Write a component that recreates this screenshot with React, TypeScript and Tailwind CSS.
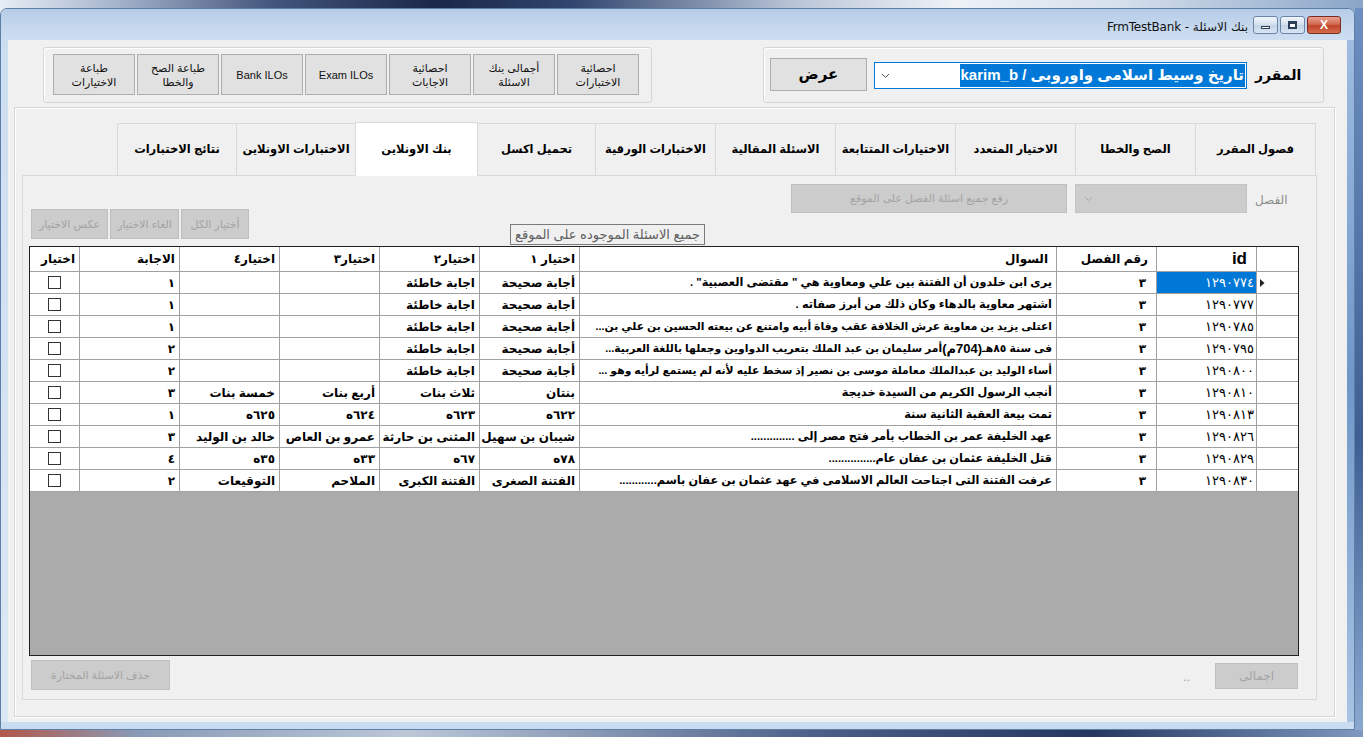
import React from "react";

type Row = {
  id: string;
  ch: string;
  q: React.ReactNode;
  c1: string;
  c2: string;
  c3: string;
  c4: string;
  a: string;
  long?: boolean;
};

const rows: Row[] = [
  { id: "١٢٩٠٧٧٤", ch: "٣", q: 'يرى ابن خلدون  أن الفتنة بين علي ومعاوية هي " مقتضى العصبية" .', c1: "أجابة صحيحة", c2: "اجابة خاطئة", c3: "", c4: "", a: "١" },
  { id: "١٢٩٠٧٧٧", ch: "٣", q: "اشتهر معاوية بالدهاء وكان ذلك من أبرز صفاته .", c1: "أجابة صحيحة", c2: "اجابة خاطئة", c3: "", c4: "", a: "١" },
  { id: "١٢٩٠٧٨٥", ch: "٣", q: "اعتلى يزيد بن معاوية عرش الخلافة عقب وفاة أبيه وامتنع عن بيعته الحسين بن علي بن...", c1: "أجابة صحيحة", c2: "اجابة خاطئة", c3: "", c4: "", a: "١", long: true },
  {
    id: "١٢٩٠٧٩٥",
    ch: "٣",
    q: (
      <>
        فى سنة ٨٥هـ <span className="text-[13px]">(704م)</span> أمر سليمان بن عبد الملك بتعريب الدواوين وجعلها باللغة العربية...
      </>
    ),
    c1: "أجابة صحيحة",
    c2: "اجابة خاطئة",
    c3: "",
    c4: "",
    a: "٢",
    long: true,
  },
  { id: "١٢٩٠٨٠٠", ch: "٣", q: "أساء الوليد بن عبدالملك معاملة موسى بن نصير إذ سخط عليه لأنه لم يستمع لرأيه وهو ...", c1: "أجابة صحيحة", c2: "اجابة خاطئة", c3: "", c4: "", a: "٢", long: true },
  { id: "١٢٩٠٨١٠", ch: "٣", q: "أنجب الرسول الكريم من السيدة خديجة", c1: "بنتان", c2: "ثلاث بنات", c3: "أربع بنات", c4: "خمسة بنات", a: "٣" },
  { id: "١٢٩٠٨١٣", ch: "٣", q: "تمت بيعة العقبة الثانية سنة", c1: "٦٢٢ه", c2: "٦٢٣ه", c3: "٦٢٤ه", c4: "٦٢٥ه", a: "١" },
  { id: "١٢٩٠٨٢٦", ch: "٣", q: "عهد الخليفة عمر بن الخطاب بأمر فتح مصر إلى ..............", c1: "شيبان بن سهيل", c2: "المثنى بن حارثة", c3: "عمرو بن العاص", c4: "خالد بن الوليد", a: "٣" },
  { id: "١٢٩٠٨٢٩", ch: "٣", q: "قتل الخليفة عثمان بن عفان عام...............", c1: "٧٨ه", c2: "٦٧ه", c3: "٣٣ه", c4: "٣٥ه", a: "٤" },
  { id: "١٢٩٠٨٣٠", ch: "٣", q: "عرفت الفتنة التى اجتاحت العالم الاسلامى في عهد عثمان بن عفان باسم............", c1: "الفتنة الصغرى", c2: "الفتنة الكبرى", c3: "الملاحم", c4: "التوقيعات", a: "٢" },
];

const tabs = [
  "نتائج الاختبارات",
  "الاختبارات الاونلاين",
  "بنك الاونلاين",
  "تحميل اكسل",
  "الاختبارات الورقية",
  "الاسئلة المقالية",
  "الاختيارات المتتابعة",
  "الاختيار المتعدد",
  "الصح والخطا",
  "فصول المقرر",
];

const tabWidths = [
  "w-[120px]",
  "w-[120px]",
  "w-[123px]",
  "w-[119px]",
  "w-[121px]",
  "w-[121px]",
  "w-[121px]",
  "w-[121px]",
  "w-[121px]",
  "w-[121px]",
];

const topButtons: string[][] = [
  ["طباعة", "الاختيارات"],
  ["طباعة الصح", "والخطا"],
  ["Bank ILOs"],
  ["Exam ILOs"],
  ["احصائية", "الاجابات"],
  ["أجمالى بنك", "الاسئلة"],
  ["احصائية", "الاختبارات"],
];

function Checkbox() {
  return <div className="w-[13px] h-[13px] border border-[#333333] bg-white" />;
}

function Cell({
  w,
  children,
  className = "",
}: {
  w: string;
  children?: React.ReactNode;
  className?: string;
}) {
  return (
    <div
      dir="rtl"
      className={`${w} shrink-0 h-full flex items-center overflow-hidden whitespace-nowrap px-[4px] border-r border-[#a0a0a0] ${className}`}
    >
      {children}
    </div>
  );
}

function DisabledButton({
  w,
  h,
  children,
  className = "",
}: {
  w: string;
  h: string;
  children: React.ReactNode;
  className?: string;
}) {
  return (
    <div
      dir="rtl"
      className={`${w} ${h} shrink-0 flex items-center justify-center bg-[#cccccc] border border-[#bfbfbf] text-[#a3a3a3] text-[11px] whitespace-nowrap ${className}`}
    >
      {children}
    </div>
  );
}

export default function App() {
  return (
    <div className="w-[1363px] h-[737px] overflow-hidden flex flex-col font-['Liberation_Sans','DejaVu_Sans',sans-serif] text-black bg-[linear-gradient(90deg,#e7edf5_0%,#aab8cf_8%,#43557c_20%,#1a2748_32%,#31456e_42%,#b8c4d6_58%,#eef2f7_70%,#d6e0ec_82%,#8aa6c8_100%)]">
      <div className="h-[8px] shrink-0" />
      <div className="flex h-[722px] shrink-0">
        {/* Window */}
        <div className="w-[1355px] h-[722px] shrink-0 flex flex-col border border-[#5d7ea6] rounded-t-[7px] bg-[#c7d9ee] overflow-hidden">
          {/* Title bar */}
          <div className="h-[31px] shrink-0 flex items-start justify-end bg-[linear-gradient(180deg,#b6cce6_0%,#c4d7ed_55%,#cddef1_100%)] pr-[13px]">
            <div dir="rtl" className="mt-[9px] mr-[5px] text-[12px] text-[#111] font-['DejaVu_Sans','Liberation_Sans',sans-serif] tracking-[-0.2px]">
              بنك الاسئلة - FrmTestBank
            </div>
            <div className="mt-[7px] flex gap-[2px]">
              <div className="w-[25px] h-[18px] rounded-[3px] border border-[#6b84a6] bg-[linear-gradient(180deg,#f2f6fb,#d4e0ee_50%,#c3d3e7_51%,#d9e5f2)] flex items-end justify-center pb-[4px]">
                <div className="w-[9px] h-[3px] bg-[#f8f8f8] border border-[#2c3e58]" />
              </div>
              <div className="w-[25px] h-[18px] rounded-[3px] border border-[#6b84a6] bg-[linear-gradient(180deg,#f2f6fb,#d4e0ee_50%,#c3d3e7_51%,#d9e5f2)] flex items-center justify-center">
                <div className="w-[9px] h-[8px] bg-white border-2 border-[#2c3e58] border-t-[3px]" />
              </div>
              <div className="w-[34px] h-[18px] rounded-[3px] border border-[#7a2a1e] bg-[linear-gradient(180deg,#e9a090,#d06a52_45%,#c0432a_55%,#d5704f)] flex items-center justify-center text-white text-[12px] font-bold leading-none">
                X
              </div>
            </div>
          </div>

          <div className="flex h-[682px] shrink-0">
            <div className="w-[7px] shrink-0 bg-[linear-gradient(180deg,#cddef1,#dbe7f4)]" />
            {/* Client */}
            <div className="w-[1339px] h-[682px] shrink-0 bg-[#f0f0f0] flex flex-col">
              {/* Top row */}
              <div className="h-[67px] shrink-0 flex items-start pt-[7px]">
                <div className="ml-[35px] w-[609px] h-[56px] shrink-0 border border-[#d5d5d5] rounded-[3px] shadow-[inset_1px_1px_0_#ffffff] pl-[9px] pt-[6px] flex gap-[2px]">
                  {topButtons.map((b, i) => (
                    <div
                      key={i}
                      dir="rtl"
                      className="w-[82px] h-[41px] shrink-0 bg-[#e1e1e1] border border-[#adadad] flex flex-col items-center justify-center text-[11px] leading-[14px] text-[#111]"
                    >
                      {b.map((l, j) => (
                        <div key={j}>{l}</div>
                      ))}
                    </div>
                  ))}
                </div>
                <div className="ml-[111px] w-[561px] h-[56px] shrink-0 border border-[#d5d5d5] rounded-[3px] shadow-[inset_1px_1px_0_#ffffff] flex items-start">
                  <div className="ml-[6px] mt-[10px] w-[97px] h-[33px] shrink-0 bg-[#e1e1e1] border border-[#adadad] flex items-center justify-center text-[15px] font-bold">
                    عرض
                  </div>
                  <div className="ml-[7px] mt-[14px] w-[373px] h-[27px] shrink-0 bg-white border border-[#0078d7] flex items-center">
                    <svg width="9" height="6" viewBox="0 0 9 6" className="ml-[6px]">
                      <path d="M1 1 L4.5 4.5 L8 1" fill="none" stroke="#555" strokeWidth="1" />
                    </svg>
                    <div className="flex-1" />
                    <div
                      dir="rtl"
                      className="mr-[1px] h-[23px] bg-[#0078d7] text-white text-[15px] font-bold flex items-center px-[1px] whitespace-nowrap"
                    >
                      تاريخ وسيط اسلامى واوروبى / karim_b
                    </div>
                  </div>
                  <div className="ml-[8px] mt-[17px] text-[14px] font-bold" dir="rtl">
                    المقرر
                  </div>
                </div>
              </div>

              {/* Panel */}
              <div className="ml-[6px] w-[1321px] h-[610px] shrink-0 border border-[#d5d5d5] shadow-[inset_1px_1px_0_#ffffff,1px_1px_0_#ffffff] pl-[7px] pt-[15px]">
                <div className="w-[1295px] flex flex-col">
                  {/* Tab headers */}
                  <div className="h-[52px] flex items-end justify-end pr-[1px]">
                    {tabs.map((t, i) => {
                      const sel = i === 2;
                      return (
                        <div
                          key={i}
                          dir="rtl"
                          className={`${tabWidths[i]} shrink-0 -ml-[1px] border border-[#d9d9d9] border-b-0 flex items-center justify-center text-[11.5px] font-bold whitespace-nowrap ${
                            sel ? "h-[54px] bg-white relative z-10 mb-[-1px]" : "h-[52px] bg-[#f0f0f0]"
                          }`}
                        >
                          {t}
                        </div>
                      );
                    })}
                  </div>
                  {/* Tab page */}
                  <div className="h-[525px] border border-[#d9d9d9] bg-[#f0f0f0] flex flex-col">
                    {/* controls row */}
                    <div className="h-[62px] mt-[8px] shrink-0 flex items-start">
                      <div className="ml-[8px] mt-[25px] flex gap-[2px]">
                        <DisabledButton w="w-[77px]" h="h-[30px]">عكس الاختيار</DisabledButton>
                        <DisabledButton w="w-[69px]" h="h-[30px]">الغاء الاختيار</DisabledButton>
                        <DisabledButton w="w-[68px]" h="h-[30px]">أختيار الكل</DisabledButton>
                      </div>
                      <div
                        dir="rtl"
                        className="ml-[261px] mt-[40px] w-[195px] h-[21px] shrink-0 border border-[#7a7a7a] flex items-center justify-center text-[13px] text-[#606060] whitespace-nowrap"
                      >
                        جميع الاسئلة الموجوده على الموقع
                      </div>
                      <DisabledButton w="w-[276px]" h="h-[29px]" className="ml-[86px]">
                        رفع جميع اسئلة الفصل على الموقع
                      </DisabledButton>
                      <div className="ml-[8px] w-[172px] h-[29px] shrink-0 bg-[#cccccc] border border-[#c4c4c4] flex items-center">
                        <svg width="9" height="6" viewBox="0 0 9 6" className="ml-[8px]">
                          <path d="M1 1 L4.5 4.5 L8 1" fill="none" stroke="#a8a8a8" strokeWidth="1" />
                        </svg>
                      </div>
                      <div dir="rtl" className="ml-[8px] mt-[7px] text-[12px] text-[#8c8c8c]">
                        الفصل
                      </div>
                    </div>

                    {/* Grid */}
                    <div className="ml-[6px] w-[1270px] h-[410px] shrink-0 border border-[#202020] bg-[#ababab] flex flex-col text-[12px]">
                      <div className="h-[25px] shrink-0 flex bg-white border-b border-[#a0a0a0] font-bold">
                        <Cell w="w-[50px]">اختيار</Cell>
                        <Cell w="w-[100px]">الاجابة</Cell>
                        <Cell w="w-[100px]">اختيار٤</Cell>
                        <Cell w="w-[100px]">اختيار٣</Cell>
                        <Cell w="w-[100px]">اختيار٢</Cell>
                        <Cell w="w-[100px]">اختيار ١</Cell>
                        <Cell w="w-[477px]" className="pr-[8px]">السوال</Cell>
                        <Cell w="w-[100px]" className="pr-[8px]">رقم الفصل</Cell>
                        <Cell w="w-[100px]" className="text-[17px] pr-[9px]">id</Cell>
                        <div className="w-[41px] shrink-0 h-full" />
                      </div>
                      {rows.map((r, i) => (
                        <div key={i} className="h-[22px] shrink-0 flex bg-white border-b border-[#a0a0a0]">
                          <Cell w="w-[50px]" className="justify-center">
                            <Checkbox />
                          </Cell>
                          <Cell w="w-[100px]" className="font-bold">{r.a}</Cell>
                          <Cell w="w-[100px]" className="font-bold">{r.c4}</Cell>
                          <Cell w="w-[100px]" className="font-bold">{r.c3}</Cell>
                          <Cell w="w-[100px]" className="font-bold">{r.c2}</Cell>
                          <Cell w="w-[100px]" className="font-bold">{r.c1}</Cell>
                          <Cell w="w-[477px]" className={`font-bold ${r.long ? "text-[10.8px]" : "text-[11.3px]"}`}>
                            {r.q}
                          </Cell>
                          <Cell w="w-[100px]" className="font-bold pr-[10px]">{r.ch}</Cell>
                          <Cell
                            w="w-[100px]"
                            className={`text-[13px] tracking-[3.6px] pr-[2px] ${i === 0 ? "bg-[#0078d7] text-white" : ""}`}
                          >
                            {r.id}
                          </Cell>
                          <div className="w-[41px] shrink-0 h-full flex items-center pl-[3px]">
                            {i === 0 ? (
                              <svg width="5" height="8" viewBox="0 0 5 8" className="shrink-0">
                                <path d="M0 0 L4.5 4 L0 8 Z" fill="#222" />
                              </svg>
                            ) : null}
                          </div>
                        </div>
                      ))}
                    </div>

                    {/* Bottom row */}
                    <div className="mt-[4px] flex items-start">
                      <DisabledButton w="w-[139px]" h="h-[30px]" className="ml-[8px]">
                        حذف الاسئلة المختارة
                      </DisabledButton>
                      <div className="flex-1" />
                      <div className="mt-[8px] text-[12px] text-[#9a9a9a]">..</div>
                      <DisabledButton w="w-[83px]" h="h-[26px]" className="ml-[25px] mt-[3px] mr-[18px] text-[12px]">
                        اجمالى
                      </DisabledButton>
                    </div>
                  </div>
                </div>
              </div>
            </div>
            <div className="w-[7px] shrink-0 bg-[linear-gradient(180deg,#9fbbe0,#6f97c9_50%,#a9c3e3)]" />
          </div>
          <div className="h-[7px] shrink-0 bg-[#c9dbef]" />
        </div>
        <div className="w-[8px] shrink-0 bg-[linear-gradient(180deg,#6d90c0,#3f5f93_60%,#8aa8cf)]" />
      </div>
      <div className="h-[7px] shrink-0 bg-[linear-gradient(90deg,#b2584a_0%,#8a9ab6_10%,#bcc7d8_30%,#4b5f88_60%,#253760_80%,#7f98bf_100%)]" />
    </div>
  );
}
